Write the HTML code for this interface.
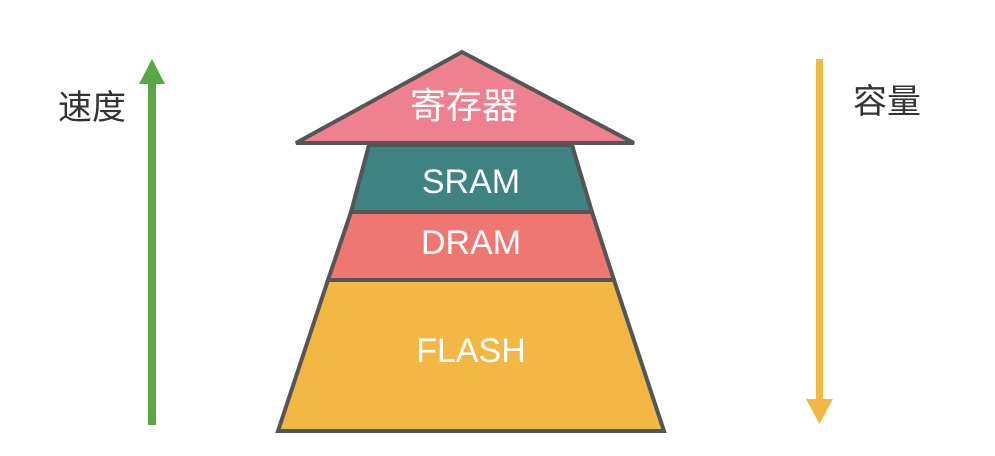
<!DOCTYPE html>
<html><head><meta charset="utf-8"><style>
html,body{margin:0;padding:0;background:#fff;width:995px;height:456px;overflow:hidden}
svg{display:block}
text{font-family:"Liberation Sans","Noto Sans CJK SC",sans-serif}
</style></head><body>
<svg width="995" height="456" viewBox="0 0 995 456" xmlns="http://www.w3.org/2000/svg">
<g stroke="#555" stroke-width="4" stroke-linejoin="miter">
<polygon points="278,431 664,431 614,280 328,280" fill="#F2B843"/>
<polygon points="328,280 614,280 592,212 351,212" fill="#EE7771"/>
<polygon points="351,212 592,212 572,145 369,145" fill="#3E8282"/>
<polygon points="296,143 634,143 462,52" fill="#EE808F"/>
</g>
<g fill="#fff" text-anchor="middle" font-size="34">
<text x="464" y="118" font-size="36">寄存器</text>
<text x="471" y="193">SRAM</text>
<text x="471" y="254">DRAM</text>
<text x="471" y="362">FLASH</text>
</g>
<rect x="148" y="82" width="8" height="343" fill="#5AA844"/>
<polygon points="139,84 165,84 152,59" fill="#5AA844"/>
<rect x="816" y="59" width="7" height="342" fill="#F2B843"/>
<polygon points="806,399 833,399 819.5,424" fill="#F2B843"/>
<g fill="#333" font-size="34">
<text x="58" y="119">速度</text>
<text x="853" y="113">容量</text>
</g>
</svg>
</body></html>
